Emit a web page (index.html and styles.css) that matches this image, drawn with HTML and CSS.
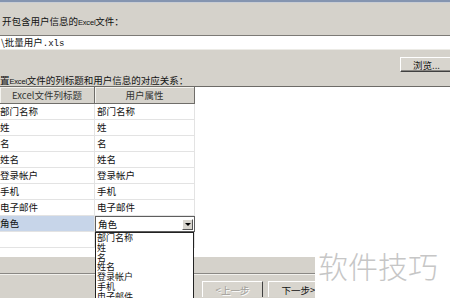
FILE: index.html
```html
<!DOCTYPE html>
<html>
  <head>
    <title>导入用户</title>
    <meta name="viewport" content="width=device-width, initial-scale=1.0">
    <link rel="stylesheet" href="styles.css">
  </head>
  <body>
    <div class="titlebar"></div>
    <div class="label first">开包含用户信息的<span class="latin">Excel</span>文件：</div>
    <div class="path">\批量用户<span class="mono">.xls</span></div>
    <div class="browse-row">
      <button class="btn browse">浏览...</button>
    </div>
    <div class="label second">置<span class="latin">Excel</span>文件的列标题和用户信息的对应关系：</div>

    <div class="grid-area">
      <div class="grid">
        <div class="cell head">Excel文件列标题</div>
        <div class="cell head">用户属性</div>

        <div class="cell left">部门名称</div><div class="cell">部门名称</div>
        <div class="cell left">姓</div><div class="cell">姓</div>
        <div class="cell left">名</div><div class="cell">名</div>
        <div class="cell left">姓名</div><div class="cell">姓名</div>
        <div class="cell left">登录帐户</div><div class="cell">登录帐户</div>
        <div class="cell left">手机</div><div class="cell">手机</div>
        <div class="cell left">电子邮件</div><div class="cell">电子邮件</div>
        <div class="cell left selected">角色</div>
        <div class="cell combo-cell">
          <div class="combo">
            <span>角色</span>
            <span class="arrow"></span>
          </div>
        </div>
        <div class="cell left"></div><div class="cell"></div>
      </div>
    </div>

    <div class="footer">
      <div class="sep"></div>
      <div class="nav">
        <button class="btn" disabled>&lt;上一步</button>
        <button class="btn">下一步&gt;</button>
      </div>
    </div>

    <div class="dropdown">
      <div>部门名称</div>
      <div>姓</div>
      <div>名</div>
      <div>姓名</div>
      <div>登录帐户</div>
      <div>手机</div>
      <div>电子邮件</div>
    </div>

    <div class="watermark">软件技巧</div>
  </body>
</html>
```

FILE: styles.css
```css
body {
  margin: 0;
  width: 450px;
  height: 298px;
  overflow: hidden;
  position: relative;
  background-color: #d5d2cb;
  font-family: "Noto Sans CJK SC", "Liberation Sans", sans-serif;
  font-size: 9.5px;
  color: #111;
}
.latin {
  font-family: "Liberation Sans", sans-serif;
  font-size: 7.5px;
  letter-spacing: -0.2px;
}
.mono {
  font-family: "Liberation Mono", monospace;
  font-size: 9px;
}
.titlebar {
  height: 2px;
  background-color: #8595b0;
  border-bottom: 1px solid #c9cdd4;
}
.label {
  white-space: nowrap;
  box-sizing: border-box;
}
.label.first {
  height: 32px;
  padding-top: 11px;
  line-height: 14px;
  padding-left: 2px;
}
.label.second {
  height: 12px;
  line-height: 12px;
}
.path {
  height: 15px;
  box-sizing: border-box;
  border-top: 1px solid #7c7a76;
  border-bottom: 1px solid #ecebe6;
  background-color: #fff;
  line-height: 13px;
  padding-left: 1px;
}
.browse-row {
  height: 24px;
  box-sizing: border-box;
  padding-top: 7px;
  display: flex;
  justify-content: flex-end;
}
.btn {
  font-family: inherit;
  font-size: 9.5px;
  background-color: #d8d5ce;
  border: 1px solid;
  border-color: #fff #404040 #404040 #fff;
  box-shadow: inset -1px -1px 0 #8a8884;
  padding: 0;
  color: #111;
}
.btn.browse {
  width: 52px;
  height: 15px;
  line-height: 12px;
  margin-right: -2px;
  text-align: left;
  padding-left: 12px;
}
.grid-area {
  height: 171px;
  box-sizing: border-box;
  border-top: 1px solid #6d6b67;
  background-color: #fff;
}
.grid {
  display: grid;
  grid-template-columns: 95px 100px;
  grid-template-rows: 17px;
  grid-auto-rows: 16px;
  width: 196px;
}
.cell {
  box-sizing: border-box;
  border-bottom: 1px solid #e3e3e3;
  border-right: 1px solid #e3e3e3;
  line-height: 15px;
  padding-left: 2px;
  white-space: nowrap;
  overflow: hidden;
}
.cell.left {
  padding-left: 0;
}
.cell.head {
  background-color: #d6d3cc;
  border-bottom: 1px solid #6f6d69;
  border-right: 1px solid #6f6d69;
  box-shadow: inset 1px 1px 0 #f4f3ef;
  text-align: center;
  line-height: 16px;
  color: #333;
  padding-left: 0;
}
.cell.selected {
  background-color: #c7d5e9;
}
.combo-cell {
  padding: 0;
  border: none;
}
.combo {
  height: 16px;
  box-sizing: border-box;
  border: 1px solid #5e5e5e;
  background-color: #fff;
  display: flex;
  align-items: center;
  justify-content: space-between;
  padding-left: 2px;
  line-height: 14px;
}
.arrow {
  width: 11px;
  height: 11px;
  box-sizing: border-box;
  margin-right: 1px;
  background-color: #d8d5ce;
  border: 1px solid;
  border-color: #fff #555 #555 #fff;
  display: flex;
  align-items: center;
  justify-content: center;
}
.arrow::after {
  content: "";
  border-left: 3px solid transparent;
  border-right: 3px solid transparent;
  border-top: 3px solid #000;
}
.footer {
  height: 41px;
}
.sep {
  margin-top: 16px;
  border-top: 1px solid #8a8884;
  border-bottom: 1px solid #f2f1ed;
}
.nav {
  display: flex;
  gap: 5px;
  padding-left: 202px;
  padding-top: 6px;
}
.nav .btn {
  width: 61px;
  height: 16px;
  border-bottom: none;
  box-shadow: none;
  line-height: 14px;
}
.nav .btn:disabled {
  color: #a09e99;
  text-shadow: 1px 1px 0 #fff;
}
.dropdown {
  position: absolute;
  left: 95px;
  top: 232px;
  width: 99px;
  height: 66px;
  box-sizing: border-box;
  border: 1px solid #222;
  border-bottom: none;
  background-color: #fff;
  font-size: 9px;
  line-height: 9.8px;
  padding-left: 1px;
  overflow: hidden;
}
.watermark {
  position: absolute;
  right: 0;
  top: 248px;
  width: 135px;
  height: 50px;
  background-color: #fff;
  font-size: 30px;
  font-weight: 300;
  line-height: 34px;
  color: #c6c6c6;
  padding-left: 3px;
  box-sizing: border-box;
  white-space: nowrap;
}
```
